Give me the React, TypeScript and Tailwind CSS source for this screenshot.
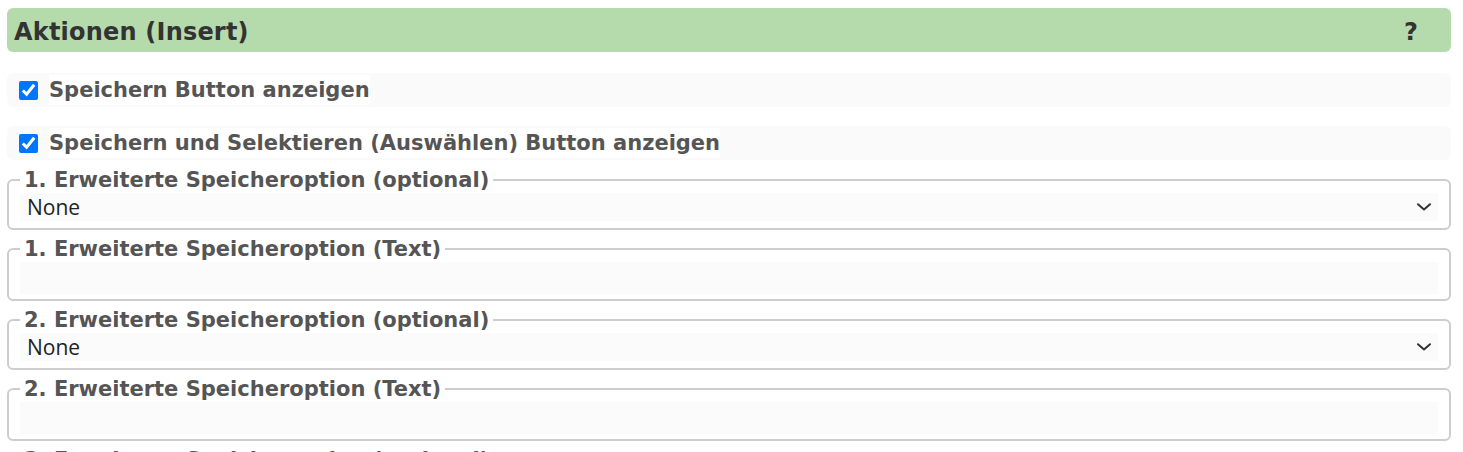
import { useState } from "react"

const bold = { fontFamily: '"DejaVu Sans", Verdana, sans-serif' }

function Chevron() {
  return (
    <svg width="14" height="8" viewBox="0 0 14 8" fill="none" className="shrink-0">
      <path d="M1 1.2 L7 6.5 L13 1.2" stroke="#333" strokeWidth="2" strokeLinecap="round" strokeLinejoin="round" />
    </svg>
  )
}

function CheckRow({ label }: { label: string }) {
  const [on, setOn] = useState(true)
  return (
    <label className="h-[34px] bg-[#fafafa] rounded-md flex items-center pl-[12px] cursor-pointer">
      <input
        type="checkbox"
        checked={on}
        onChange={() => setOn(v => !v)}
        className="w-[19px] h-[19px] m-0 accent-[#0075ff]"
      />
      <span className="ml-[11px] bg-white text-[21px] leading-[30px] font-bold text-[#555]" style={bold}>
        {label}
      </span>
    </label>
  )
}

function SelectField({ legend }: { legend: string }) {
  return (
    <fieldset className="border-2 border-[#cdcdcd] rounded-md px-[11px] pb-[7px] pt-[1px]">
      <legend className="px-1 text-[21px] leading-[24px] font-bold text-[#555]" style={bold}>
        {legend}
      </legend>
      <div className="h-[28px] bg-[#fbfbfb] flex items-center justify-between pl-[7px] pr-[7px]">
        <span className="text-[21px] text-[#222] pt-[1px]" style={{ fontFamily: '"Open Sans", "Noto Sans", sans-serif' }}>
          None
        </span>
        <Chevron />
      </div>
    </fieldset>
  )
}

function TextField({ legend }: { legend: string }) {
  return (
    <fieldset className="border-2 border-[#cdcdcd] rounded-md px-[11px] pb-[5px] pt-[1px]">
      <legend className="px-1 text-[21px] leading-[24px] font-bold text-[#555]" style={bold}>
        {legend}
      </legend>
      <input type="text" className="w-full h-[32px] bg-[#fbfbfb] outline-none px-2" />
    </fieldset>
  )
}

export default function App() {
  return (
    <div className="min-h-screen bg-white pt-[8px] pl-[7px] pr-[12px]">
      <div className="h-[44px] bg-[#b5dbad] rounded-md flex items-center justify-between pl-[7px] pr-[33px] pt-[3px]">
        <h1 className="text-[24px] leading-[30px] tracking-[0.2px] font-bold text-[#333]" style={bold}>
          Aktionen (Insert)
        </h1>
        <span className="text-[24px] leading-[30px] font-bold text-[#333]" style={bold}>?</span>
      </div>

      <div className="mt-[21px] flex flex-col gap-[19px]">
        <CheckRow label="Speichern Button anzeigen" />
        <CheckRow label="Speichern und Selektieren (Auswählen) Button anzeigen" />
      </div>

      <div className="mt-[8px] flex flex-col gap-[7px]">
        <SelectField legend="1. Erweiterte Speicheroption (optional)" />
        <TextField legend="1. Erweiterte Speicheroption (Text)" />
        <SelectField legend="2. Erweiterte Speicheroption (optional)" />
        <TextField legend="2. Erweiterte Speicheroption (Text)" />
        <SelectField legend="3. Erweiterte Speicheroption (optional)" />
      </div>
    </div>
  )
}
